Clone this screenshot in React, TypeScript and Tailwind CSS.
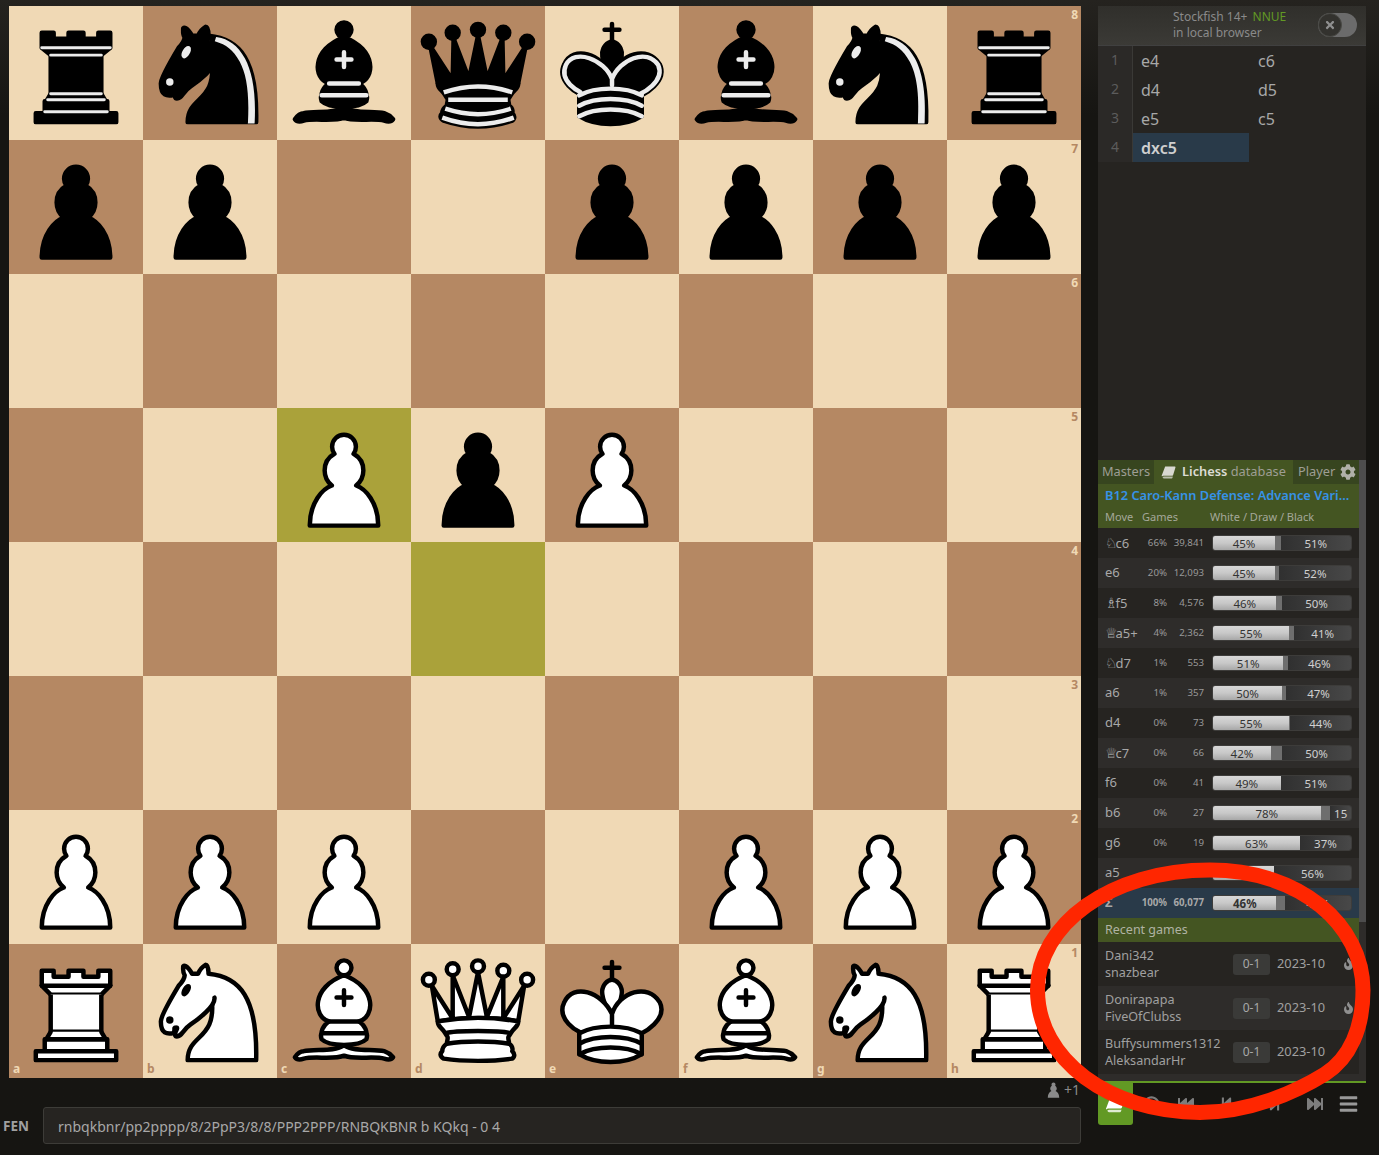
import { FaBars, FaBullseye, FaCog, FaFastBackward, FaFastForward, FaFire, FaStepBackward, FaStepForward, FaTimes } from 'react-icons/fa'

const BOARD = [
  'rnbqkbnr',
  'pp..pppp',
  '........',
  '..PpP...',
  '........',
  '........',
  'PPP..PPP',
  'RNBQKBNR',
]
const HIGHLIGHTS = ['c5', 'd4']
const FILES = 'abcdefgh'
const PAWN_PATH = 'M22.5 9c-2.21 0-4 1.79-4 4 0 .89.29 1.71.78 2.38C17.33 16.5 16 18.59 16 21c0 2.03.94 3.84 2.41 5.03-3 1.06-7.41 5.55-7.41 13.47h23c0-7.92-4.41-12.41-7.41-13.47 1.47-1.19 2.41-3 2.41-5.03 0-2.41-1.33-4.5-3.28-5.62.49-.67.78-1.49.78-2.38 0-2.21-1.79-4-4-4z'

const MOVES = [
  ['e4', 'c6'],
  ['d4', 'd5'],
  ['e5', 'c5'],
  ['dxc5', ''],
]

// fig is the figurine shown in front of the square, white/black are percentages
const EXPLORER = [
  { fig: '♘', move: 'c6', pct: '66%', games: '39,841', w: 45, b: 51 },
  { fig: '', move: 'e6', pct: '20%', games: '12,093', w: 45, b: 52 },
  { fig: '♗', move: 'f5', pct: '8%', games: '4,576', w: 46, b: 50 },
  { fig: '♕', move: 'a5+', pct: '4%', games: '2,362', w: 55, b: 41 },
  { fig: '♘', move: 'd7', pct: '1%', games: '553', w: 51, b: 46 },
  { fig: '', move: 'a6', pct: '1%', games: '357', w: 50, b: 47 },
  { fig: '', move: 'd4', pct: '0%', games: '73', w: 55, b: 44 },
  { fig: '♕', move: 'c7', pct: '0%', games: '66', w: 42, b: 50 },
  { fig: '', move: 'f6', pct: '0%', games: '41', w: 49, b: 51 },
  { fig: '', move: 'b6', pct: '0%', games: '27', w: 78, b: 15 },
  { fig: '', move: 'g6', pct: '0%', games: '19', w: 63, b: 37 },
  { fig: '', move: 'a5', pct: '0%', games: '15', w: 44, b: 56 },
]

const RECENT = [
  ['Dani342', 'snazbear'],
  ['Donirapapa', 'FiveOfClubss'],
  ['Buffysummers1312', 'AleksandarHr'],
]

function Piece({ code }: { code: string }) {
  const white = code === code.toUpperCase()
  const fill = white ? '#fff' : '#000'
  const line = white ? '#000' : '#ececec'
  const type = code.toLowerCase()
  const common = { fill, fillRule: 'evenodd' as const, stroke: '#000', strokeWidth: 1.5, strokeLinecap: 'round' as const, strokeLinejoin: 'round' as const }

  return (
    <svg viewBox="0 0 45 45" className="absolute inset-0 h-full w-full">
      {type === 'p' && <path {...common} d={PAWN_PATH} />}
      {type === 'r' && white && (
        <g {...common}>
          <path strokeLinecap="butt" d="M9 39h27v-3H9v3zM12 36v-4h21v4H12zM11 14V9h4v2h5V9h5v2h5V9h4v5" />
          <path d="M34 14l-3 3H14l-3-3" />
          <path strokeLinecap="butt" strokeLinejoin="miter" d="M31 17v12.5H14V17" />
          <path d="M31 29.5l1.5 2.5h-20l1.5-2.5" />
          <path fill="none" strokeLinejoin="miter" d="M11 14h23" />
        </g>
      )}
      {type === 'r' && !white && (
        <g {...common}>
          <path strokeLinecap="butt" d="M9 39h27v-3H9v3zM12.5 32l1.5-2.5h17l1.5 2.5h-20zM12 36v-4h21v4H12z" />
          <path strokeLinecap="butt" strokeLinejoin="miter" d="M14 29.5v-13h17v13H14z" />
          <path strokeLinecap="butt" d="M14 16.5L11 14h23l-3 2.5H14zM11 14V9h4v2h5V9h5v2h5V9h4v5H11z" />
          <path fill="none" stroke={line} strokeWidth={1} strokeLinejoin="miter" d="M12 35.5h21M13 31.5h19M14 29.5h17M14 16.5h17M11 14h23" />
        </g>
      )}
      {type === 'n' && (
        <g {...common}>
          <path d="M22 10c10.5 1 16.5 8 16 29H15c0-9 10-6.5 8-21" />
          <path d="M24 18c.38 2.91-5.55 7.37-8 9-3 2-2.82 4.34-5 4-1.042-.94 1.41-3.04 0-3-1 0 .19 1.23-1 2-1 0-4.003 1-4-4 0-2 6-12 6-12s1.89-1.9 2-3.5c-.73-.994-.5-2-.5-3 1-1 3 2.5 3 2.5h2s.78-1.992 2.5-3c1 0 1 3 1 3" />
          <path fill={line} stroke={line} d="M9.5 25.5a.5.5 0 1 1-1 0 .5.5 0 1 1 1 0zm5.433-9.75a.5 1.5 30 1 1-.866-.5.5 1.5 30 1 1 .866.5z" />
          {!white && (
            <path fill="#ececec" stroke="none" d="M24.55 10.4l-.45 1.45.5.15c3.15 1 5.65 2.49 7.9 6.75S35.75 29.06 35.25 39l-.05.5h2.25l.05-.5c.5-10.06-.88-16.85-3.25-21.34-2.37-4.49-5.79-6.64-9.19-7.16l-.51-.1z" />
          )}
        </g>
      )}
      {type === 'b' && (
        <g {...common}>
          <g strokeLinecap="butt">
            <path d="M9 36c3.39-.97 10.11.43 13.5-2 3.39 2.43 10.11 1.03 13.5 2 0 0 1.65.54 3 2-.68.97-1.65.99-3 .5-3.39-.97-10.11.46-13.5-1-3.39 1.46-10.11.03-13.5 1-1.354.49-2.323.47-3-.5 1.354-1.94 3-2 3-2z" />
            <path d="M15 32c2.5 2.5 12.5 2.5 15 0 .5-1.5 0-2 0-2 0-2.5-2.5-4-2.5-4 5.5-1.5 6-11.5-5-15.5-11 4-10.5 14-5 15.5 0 0-2.5 1.5-2.5 4 0 0-.5.5 0 2z" />
            <path d="M25 8a2.5 2.5 0 1 1-5 0 2.5 2.5 0 1 1 5 0z" />
          </g>
          <path fill="none" stroke={line} strokeLinejoin="miter" d="M17.5 26h10M15 30h15m-7.5-14.5v5M20 18h5" />
        </g>
      )}
      {type === 'q' && white && (
        <g {...common} strokeLinecap="butt">
          <path d="M8 12a2 2 0 1 1-4 0 2 2 0 1 1 4 0zM24.5 7.5a2 2 0 1 1-4 0 2 2 0 1 1 4 0zM41 12a2 2 0 1 1-4 0 2 2 0 1 1 4 0zM16 8.5a2 2 0 1 1-4 0 2 2 0 1 1 4 0zM33 9a2 2 0 1 1-4 0 2 2 0 1 1 4 0z" />
          <path d="M9 26c8.5-1.5 21-1.5 27 0l2-12-7 11V11l-5.5 13.5-3-15-3 15-5.5-14V25L7 14l2 12z" />
          <path d="M9 26c0 2 1.5 2 2.5 4 1 1.5 1 1 .5 3.5-1.5 1-1.5 2.5-1.5 2.5-1.5 1.5.5 2.5.5 2.5 6.5 1 16.5 1 23 0 0 0 1.5-1 0-2.5 0 0 .5-1.5-1-2.5-.5-2.5-.5-2 .5-3.5 1-2 2.5-2 2.5-4-8.5-1.5-18.5-1.5-27 0z" />
          <path fill="none" d="M11.5 30c3.5-1 18.5-1 22 0M12 33.5c6-1 15-1 21 0" />
        </g>
      )}
      {type === 'q' && !white && (
        <g {...common} strokeLinecap="butt">
          <g stroke="none">
            <circle cx="6" cy="12" r="2.75" />
            <circle cx="14" cy="9" r="2.75" />
            <circle cx="22.5" cy="8" r="2.75" />
            <circle cx="31" cy="9" r="2.75" />
            <circle cx="39" cy="12" r="2.75" />
          </g>
          <path d="M9 26c8.5-1.5 21-1.5 27 0l2.5-12.5L31 25l-.3-14.1-5.2 13.6-3-14.5-3 14.5-5.2-13.6L14 25 6.5 13.5 9 26z" />
          <path d="M9 26c0 2 1.5 2 2.5 4 1 1.5 1 1 .5 3.5-1.5 1-1.5 2.5-1.5 2.5-1.5 1.5.5 2.5.5 2.5 6.5 1 16.5 1 23 0 0 0 1.5-1 0-2.5 0 0 .5-1.5-1-2.5-.5-2.5-.5-2 .5-3.5 1-2 2.5-2 2.5-4-8.5-1.5-18.5-1.5-27 0z" />
          <path fill="none" d="M11 38.5a35 35 1 0 0 23 0" />
          <path fill="none" stroke={line} d="M11 29a35 35 1 0 1 23 0M12.5 31.5h20M11.5 34.5a35 35 1 0 0 22 0M10.5 37.5a35 35 1 0 0 24 0" />
        </g>
      )}
      {type === 'k' && (
        <g {...common} fill="none">
          <path strokeLinejoin="miter" d="M22.5 11.63V6M20 8h5" />
          <path fill={fill} strokeLinecap="butt" strokeLinejoin="miter" d="M22.5 25s4.5-7.5 3-10.5c0 0-1-2.5-3-2.5s-3 2.5-3 2.5c-1.5 3 3 10.5 3 10.5" />
          <path fill={fill} d="M11.5 37c5.5 3.5 15.5 3.5 21 0v-7s9-4.5 6-10.5c-4-6.5-13.5-3.5-16 4V27v-3.5c-3.5-7.5-13-10.5-16-4-3 6 5 10 5 10V37z" />
          {!white && (
            <path stroke={line} d="M32 29.5s8.5-4 6.03-9.65C34.15 14 25 18 22.5 24.5l.01 2.1-.01-2.1C20 18 9.906 14 6.997 19.85c-2.497 5.65 4.853 9 4.853 9" />
          )}
          <path stroke={line} d="M11.5 30c5.5-3 15.5-3 21 0m-21 3.5c5.5-3 15.5-3 21 0m-21 3.5c5.5-3 15.5-3 21 0" />
        </g>
      )}
    </svg>
  )
}

// slanted closed book, same glyph on the tab and on the green button
function BookIcon({ className }: { className: string }) {
  return (
    <svg viewBox="0 0 16 14" className={className} fill="currentColor">
      <path d="M4.4.6h10.4c.5 0 .8.4.7.9L12.9 10c-.1.3-.4.5-.7.5H2.6C1.9 10.500 1.300 10.900 1 11.300L.6 10.600Z" />
      <path d="M1.800 11.900c.3-.3.7-.5 1.200-.5h9.700l-.5 1.500c-.1.3-.4.5-.7.5H3c-.7 0-1.500-.9-1.200-1.500z" opacity="0.8" />
    </svg>
  )
}

function Board() {
  const squares = []
  for (let r = 0; r < 8; r++) {
    for (let f = 0; f < 8; f++) {
      const name = FILES[f] + (8 - r)
      const light = (r + f) % 2 === 0
      const piece = BOARD[r][f]
      const bg = HIGHLIGHTS.includes(name) ? 'bg-[#aaa23a]' : light ? 'bg-[#f0d9b5]' : 'bg-[#b58863]'
      const coord = light ? 'text-[#b58863]' : 'text-[#f0d9b5]'
      squares.push(
        <div key={name} className={`relative ${bg}`}>
          {f === 7 && (
            <span className={`absolute right-[3px] top-[1px] text-[12px] leading-[16px] font-bold ${coord}`}>{8 - r}</span>
          )}
          {r === 7 && (
            <span className={`absolute bottom-[1px] left-[4px] text-[12px] leading-[16px] font-bold ${coord}`}>{FILES[f]}</span>
          )}
          {piece !== '.' && <Piece code={piece} />}
        </div>,
      )
    }
  }
  return <div className="grid h-[1072px] w-[1072px] grid-cols-8 grid-rows-8">{squares}</div>
}

function EnginePanel() {
  return (
    <div className="flex h-[454px] flex-col rounded-t-[3px] bg-[#262421]">
      <div className="flex h-[40px] items-start border-b border-[#404040] bg-gradient-to-b from-[#302f2b] to-[#3b3a36] pl-[75px] pr-[9px]">
        <div className="mt-[3px] w-[145px] text-[12px] leading-[16px] text-[#8a8a8a]">
          Stockfish 14+ <span className="ml-[2px] text-[#629924]">NNUE</span>
          <br />
          in local browser
        </div>
        <div className="mt-[7px] flex h-[24px] w-[39px] items-center rounded-full bg-[#6b6b6b]">
          <div className="flex h-[24px] w-[24px] items-center justify-center rounded-full border border-[#4a4a46] bg-[#33322e] text-[#8f8f8f]">
            <FaTimes className="h-[12px] w-[12px]" />
          </div>
        </div>
      </div>
      <div className="grid grid-cols-[35px_116px_117px]">
        {MOVES.map((m, i) => (
          <div key={i} className="contents">
            <div className="h-[29px] border-r border-[#3a3936] bg-[#2b2927] text-center text-[14px] leading-[28px] text-[#5c5c5c]">{i + 1}</div>
            <div className={`h-[29px] pl-[8px] pt-[1px] text-[16px] leading-[29px] ${m[0] === 'dxc5' ? 'bg-[#293a49] font-semibold text-[#cfcfcf]' : 'text-[#a8a8a8]'}`}>{m[0]}</div>
            <div className="h-[29px] pl-[9px] pt-[1px] text-[16px] leading-[29px] text-[#a8a8a8]">{m[1]}</div>
          </div>
        ))}
      </div>
    </div>
  )
}

function Bar({ w, b, strong }: { w: number; b: number; strong?: boolean }) {
  return (
    <div className="flex h-[16px] w-[140px] overflow-hidden rounded-[3px] border border-[#3d3c3a] text-[11.5px] leading-[15px]">
      <div
        className={`bg-gradient-to-b from-[#d8d8d8] via-[#c8c8c8] to-[#a8a8a8] text-center text-[#333] ${strong ? 'font-bold' : ''}`}
        style={{ width: `${w}%` }}
      >
        {w}%
      </div>
      <div className="flex-1 bg-[#6e6e6e]" />
      <div
        className="bg-gradient-to-r from-[#303030] to-[#484848] text-center text-[#d0d0d0]"
        style={{ width: `${b}%` }}
      >
        {b > 15 ? `${b}%` : b}
      </div>
    </div>
  )
}

function ExplorerPanel() {
  return (
    <div className="flex h-[623px] border-b-2 border-[#629924] bg-[#262421]">
      <div className="flex w-[261px] flex-col">
        <div className="flex h-[24px] items-center bg-[#445522] text-[12.8px] text-[#9e9e94]">
          <div className="flex h-full w-[56px] items-center justify-center bg-[#37451f]">Masters</div>
          <div className="flex h-full w-[139px] items-center justify-center gap-[6px]">
            <BookIcon className="h-[13px] w-[15px] text-[#d8d8d0]" />
            <span><b className="font-semibold text-[#dcdcd4]">Lichess</b> database</span>
          </div>
          <div className="flex h-full flex-1 items-center bg-[#37451f] pl-[5px]">
            Player
            <FaCog className="ml-[5px] h-[16px] w-[16px] text-[#b0b0a8]" />
          </div>
        </div>
        <div className="h-[23px] whitespace-nowrap bg-[#445522] pl-[7px] text-[12.8px] font-semibold leading-[23px] text-[#3692e7]">
          B12 Caro-Kann Defense: Advance Vari…
        </div>
        <div className="flex h-[21px] items-center bg-[#445522] pl-[7px] text-[11px] text-[#a5a89a]">
          <span className="w-[37px]">Move</span>
          <span className="w-[68px]">Games</span>
          <span>White / Draw / Black</span>
        </div>
        {EXPLORER.map((row, i) => (
          <div key={row.move + i} className={`flex h-[30px] items-center pl-[7px] ${i % 2 ? 'bg-[#2e2c2a]' : 'bg-[#262421]'}`}>
            <span className="w-[42px] text-[13px] text-[#a8a8a8]">
              {row.fig && <span className="-mr-[2px] font-['DejaVu_Sans',sans-serif] text-[14px]">{row.fig}</span>}
              {row.move}
            </span>
            <span className="w-[20px] text-right text-[9.7px] text-[#999]">{row.pct}</span>
            <span className="w-[37px] text-right text-[9.7px] text-[#999]">{row.games}</span>
            <span className="ml-[8px]">
              <Bar w={row.w} b={row.b} />
            </span>
          </div>
        ))}
        <div className="flex h-[30px] items-center bg-[#293a49] pl-[7px]">
          <span className="w-[29px] text-[13px] font-bold text-[#a8a8a8]">Σ</span>
          <span className="w-[33px] text-right text-[9.7px] font-bold text-[#a8a8a8]">100%</span>
          <span className="w-[37px] text-right text-[9.7px] font-bold text-[#a8a8a8]">60,077</span>
          <span className="ml-[8px]">
            <Bar w={46} b={48} strong />
          </span>
        </div>
        <div className="h-[24px] bg-[#445522] pl-[7px] text-[12.5px] leading-[24px] text-[#b0b3a4]">Recent games</div>
        {RECENT.map((names, i) => (
          <div key={names[0]} className={`flex h-[44px] items-center pl-[7px] ${i % 2 ? 'bg-[#2e2c2a]' : 'bg-[#262421]'}`}>
            <div className="w-[128px] text-[12.6px] leading-[17px] text-[#a0a0a0]">
              {names[0]}
              <br />
              {names[1]}
            </div>
            <div className="flex h-[21px] w-[37px] items-center justify-center rounded-[3px] bg-[#3a3a38] text-[12px] text-[#a8a8a8]">0-1</div>
            <div className="ml-[7px] text-[12.8px] text-[#a0a0a0]">2023-10</div>
            <FaFire className="ml-[18px] h-[12px] w-[11px] text-[#8f8f8f]" />
          </div>
        ))}
        <div className="flex-1 bg-[#2e2c2a]" />
      </div>
      <div className="flex w-[7px] flex-col bg-[#2e2c2a]">
        <div className="h-[462px] bg-[#4d4d4d]" />
      </div>
    </div>
  )
}

function Controls() {
  return (
    <div className="flex h-[42px] items-center">
      <div className="flex h-full w-[35px] items-center justify-center rounded-b-[3px] bg-[#629924]">
        <BookIcon className="h-[18px] w-[21px] text-white" />
      </div>
      <FaBullseye className="ml-[10px] h-[17px] w-[17px] text-[#7d7d7d]" />
      <FaFastBackward className="ml-[18px] h-[16px] w-[16px] text-[#7d7d7d]" />
      <FaStepBackward className="ml-[26px] h-[16px] w-[13px] text-[#7d7d7d]" />
      <FaStepForward className="ml-[35px] h-[16px] w-[13px] text-[#7d7d7d]" />
      <FaFastForward className="ml-[26px] h-[16px] w-[16px] text-[#7d7d7d]" />
      <FaBars className="ml-[16px] h-[20px] w-[19px] text-[#999]" />
    </div>
  )
}

export default function App() {
  return (
    <div className="relative h-[1155px] w-[1379px] overflow-hidden bg-[#161512] bg-gradient-to-b from-[#25231f] to-[#161512] to-[10%] font-['Noto_Sans',sans-serif]">
      <div className="flex pt-[6px]">
        <div className="w-[1098px]">
          <div className="pl-[9px]">
            <Board />
          </div>
          <div className="flex h-[29px] items-start justify-end gap-[4px] pr-[18px] pt-[3px] text-[14px] leading-[18px] text-[#8a8a8a]">
            <svg viewBox="10 8 25 32" className="mt-[1px] h-[16px] w-[13px]" fill="currentColor">
              <path d={PAWN_PATH} />
            </svg>
            +1
          </div>
          <div className="flex items-center pr-[17px]">
            <span className="w-[43px] pl-[3px] pt-[2px] text-[13.5px] font-bold text-[#a0a0a0]">FEN</span>
            <div className="h-[37px] flex-1 rounded-[3px] border border-[#3d3c38] bg-[#262421] pl-[14px] text-[14px] leading-[38px] text-[#a8a8a8]">
              rnbqkbnr/pp2pppp/8/2PpP3/8/8/PPP2PPP/RNBQKBNR b KQkq - 0 4
            </div>
          </div>
        </div>
        <div className="w-[268px]">
          <EnginePanel />
          <ExplorerPanel />
          <Controls />
        </div>
      </div>
      <svg className="pointer-events-none absolute inset-0 h-[1155px] w-[1379px]" viewBox="0 0 1379 1155">
        <path
          d="M1210 870C1300 870 1363 925 1363 990C1363 1028 1350 1058 1325 1074C1296 1092 1250 1112.500 1200 1112.500C1110 1112.500 1037.500 1060 1037.500 990C1037.500 925 1110 870 1210 870Z"
          fill="none"
          stroke="#ff2600"
          strokeWidth="15"
        />
      </svg>
    </div>
  )
}
